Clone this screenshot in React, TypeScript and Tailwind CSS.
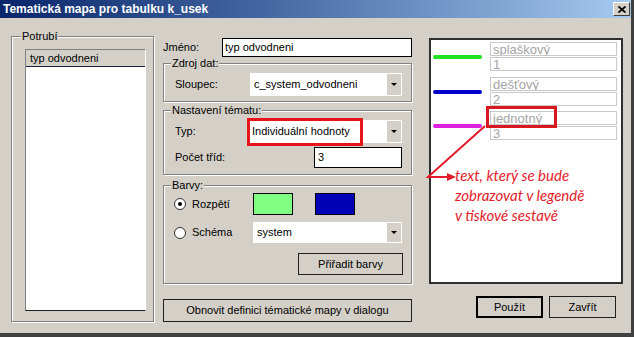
import React from "react";

function GroupBox({
  label,
  labelLeft = "left-[7px]",
  className = "",
  children,
}: {
  label: string;
  labelLeft?: string;
  className?: string;
  children?: React.ReactNode;
}) {
  return (
    <div className={`relative border border-[#808080] shadow-[inset_1px_1px_0_#fff,1px_1px_0_#fff] ${className}`}>
      <span className={`absolute -top-[7px] ${labelLeft} bg-[#d4d0c8] px-px leading-[13px]`}>{label}</span>
      {children}
    </div>
  );
}

function Combo({ value, className = "" }: { value: string; className?: string }) {
  return (
    <div className={`flex items-center justify-between bg-white pl-[4px] pr-px ${className}`}>
      <span className="truncate">{value}</span>
      <span className="flex h-[calc(100%-2px)] w-[14px] items-center justify-center bg-[#d4d0c8]">
        <span className="h-0 w-0 border-x-[3px] border-t-[3px] border-x-transparent border-t-black" />
      </span>
    </div>
  );
}

function Radio({ checked, label }: { checked?: boolean; label: string }) {
  return (
    <div className="flex items-center gap-[6px]">
      <span className="flex h-[12px] w-[12px] items-center justify-center rounded-full border border-[#303030] bg-white">
        {checked && <span className="h-[4px] w-[4px] rounded-full bg-black" />}
      </span>
      <span>{label}</span>
    </div>
  );
}

function Button({ label, className = "" }: { label: string; className?: string }) {
  return (
    <div className={`flex items-center justify-center bg-[#d4d0c8] ${className}`}>
      {label}
    </div>
  );
}

const legend = [
  { name: "splaškový", value: "1", color: "bg-[#22e022]", mt: "mt-[2px]" },
  { name: "dešťový", value: "2", color: "bg-[#0000c8]", mt: "mt-[6px]" },
  { name: "jednotný", value: "3", color: "bg-[#e020e0]", mt: "mt-[5px]" },
];

export default function App() {
  return (
    <div className="flex h-[337px] w-[634px] flex-col border-r-[3px] border-b-[4px] border-[#404040] bg-[#d4d0c8] font-['Liberation_Sans',Arial,sans-serif] text-[11px] text-black">
      <div className="flex h-[18px] shrink-0 items-center justify-between bg-linear-to-r from-[#0a246a] to-[#a6caf0] pl-[3px] pr-px">
        <span className="text-[12px] font-bold text-white">Tematická mapa pro tabulku k_usek</span>
        <span className="flex h-[14px] w-[17px] items-center justify-center border border-t-white border-l-white border-r-[#404040] border-b-[#404040] bg-[#d4d0c8]">
          <svg width="8" height="7" viewBox="0 0 8 7">
            <path d="M0.5 0.5 L7.5 6.5 M7.5 0.5 L0.5 6.5" stroke="black" strokeWidth="1.8" />
          </svg>
        </span>
      </div>

      <div className="flex flex-1">
        <div className="ml-[11px] mt-[18px]">
          <GroupBox label="Potrubí" labelLeft="left-[9px]" className="h-[286px] w-[143px] pl-[13px] pt-[12px]">
            <div className="h-[262px] w-[121px] border border-t-[#808080] border-l-[#808080] border-r-white border-b-[#202020] bg-white">
              <div className="flex h-[17px] items-center border-b border-[#202040] bg-[#d4d0c8] pl-[4px]">typ odvodneni</div>
            </div>
          </GroupBox>
        </div>

        <div className="ml-[9px] mt-[20px] flex w-[249px] flex-col">
          <div className="flex h-[19px] items-center">
            <span className="w-[59px]">Jméno:</span>
            <div className="flex h-[19px] w-[190px] items-center border border-black bg-white pl-[2px]">typ odvodneni</div>
          </div>

          <GroupBox label="Zdroj dat:" className="mt-[6px] h-[39px]">
            <div className="flex items-center pl-[11px] pt-[9px]">
              <span className="w-[75px]">Sloupec:</span>
              <Combo value="c_system_odvodneni" className="h-[23px] w-[152px]" />
            </div>
          </GroupBox>

          <GroupBox label="Nastavení tématu:" className="mt-[8px] h-[65px]">
            <div className="flex items-center pl-[11px] pt-[9px]">
              <span className="w-[73px]">Typ:</span>
              <div className="relative">
                <Combo value="Individuální hodnoty" className="h-[23px] w-[154px]" />
                <div className="absolute -left-[1px] -top-[2px] h-[28px] w-[116px] border-[3px] border-[#e8141c]" />
              </div>
            </div>
            <div className="mt-[4px] flex items-center pl-[11px]">
              <span className="w-[139px]">Počet tříd:</span>
              <div className="flex h-[21px] w-[88px] items-center border border-black bg-white pl-[3px]">3</div>
            </div>
          </GroupBox>

          <GroupBox label="Barvy:" className="mt-[10px] h-[99px]">
            <div className="flex items-center pl-[10px] pt-[7px]">
              <div className="w-[79px]">
                <Radio checked label="Rozpětí" />
              </div>
              <div className="h-[22px] w-[40px] border border-black bg-[#80ff80]" />
              <div className="ml-[22px] h-[22px] w-[40px] border border-black bg-[#0000b4]" />
            </div>
            <div className="mt-[7px] flex items-center pl-[10px]">
              <div className="w-[79px]">
                <Radio label="Schéma" />
              </div>
              <Combo value="system" className="h-[21px] w-[149px]" />
            </div>
            <div className="mt-[10px] flex justify-end pr-[8px]">
              <Button label="Přiřadit barvy" className="h-[22px] w-[105px] border border-[#202020]" />
            </div>
          </GroupBox>

          <Button label="Obnovit definici tématické mapy v dialogu" className="mt-[15px] h-[23px] w-full border border-[#202020]" />
        </div>

        <div className="ml-[17px] mt-[20px] flex flex-col">
          <div className="relative h-[246px] w-[194px] border-2 border-[#303030] bg-white">
            {legend.map((item) => (
              <div key={item.name} className={`flex items-center ${item.mt}`}>
                <div className={`ml-[2px] h-[4px] w-[49px] rounded-full ${item.color}`} />
                <div className="ml-[8px] flex w-[127px] flex-col gap-px">
                  <div className="flex h-[14px] items-center overflow-hidden border border-[#c8c8c8] pl-[2px] text-[13px] leading-[13px] text-[#a4a4a4]">
                    {item.name}
                  </div>
                  <div className="flex h-[14px] items-center overflow-hidden border border-[#c8c8c8] pl-[2px] text-[13px] leading-[13px] text-[#a4a4a4]">
                    {item.value}
                  </div>
                </div>
              </div>
            ))}

            <div className="absolute left-[55px] top-[66px] h-[22px] w-[71px] border-[3px] border-[#d81820]" />
            <svg className="absolute -left-[4px] top-0 overflow-visible" width="90" height="150" viewBox="0 0 90 150">
              <path d="M58 86 L1 137 L24 137" fill="none" stroke="#e41b2a" strokeWidth="2" />
              <polygon points="20,133 29,137 20,141" fill="#e41b2a" />
            </svg>
            <div className="absolute left-[24px] top-[125px] whitespace-nowrap font-['Lato',sans-serif] text-[15px] italic leading-[20px] text-[#e41b2a]">
              <div>text, který se bude</div>
              <div>zobrazovat v legendě</div>
              <div>v tiskové sestavě</div>
            </div>
          </div>

          <div className="mt-[12px] flex gap-[6px] pl-[47px]">
            <Button label="Použít" className="h-[22px] w-[67px] border-2 border-black" />
            <Button label="Zavřít" className="h-[22px] w-[67px] border border-[#202020]" />
          </div>
        </div>
      </div>
    </div>
  );
}
